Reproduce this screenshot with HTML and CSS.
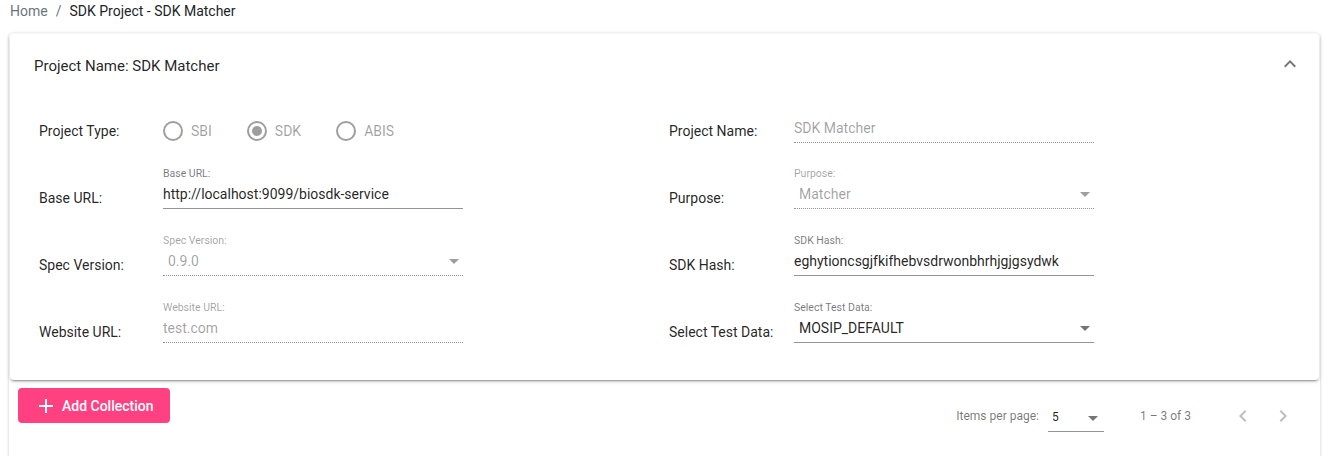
FILE: index.html
```html
<!DOCTYPE html>
<html>
<head>
<meta charset="utf-8">
<link rel="stylesheet" href="styles.css">
</head>
<body>
<div class="crumbs"><span class="crumb-home">Home</span><span class="crumb-sep">/</span><span class="crumb-cur">SDK Project - SDK Matcher</span></div>
<div class="outer">
  <div class="panel">
    <div class="panel-head">
      <span class="panel-title">Project Name: SDK Matcher</span>
      <svg class="chev" viewBox="0 0 24 24" width="24" height="24"><path d="M12 8l-6 6 1.41 1.41L12 10.83l4.59 4.58L18 14z"/></svg>
    </div>
    <div class="panel-body">
      <div class="col">
        <div class="row">
          <div class="lbl">Project Type:</div>
          <div class="radios">
            <span class="radio"><span class="ring"></span>SBI</span>
            <span class="radio on"><span class="ring"></span>SDK</span>
            <span class="radio"><span class="ring"></span>ABIS</span>
          </div>
        </div>
        <div class="row">
          <div class="lbl">Base URL:</div>
          <div class="field"><div class="flabel">Base URL:</div><div class="val">http://localhost:9099/biosdk-service</div></div>
        </div>
        <div class="row">
          <div class="lbl">Spec Version:</div>
          <div class="field dis"><div class="flabel">Spec Version:</div><div class="val sel">0.9.0<span class="arrow"></span></div></div>
        </div>
        <div class="row">
          <div class="lbl">Website URL:</div>
          <div class="field dis"><div class="flabel">Website URL:</div><div class="val">test.com</div></div>
        </div>
      </div>
      <div class="col">
        <div class="row">
          <div class="lbl">Project Name:</div>
          <div class="field dis"><div class="flabel"></div><div class="val">SDK Matcher</div></div>
        </div>
        <div class="row">
          <div class="lbl">Purpose:</div>
          <div class="field dis"><div class="flabel">Purpose:</div><div class="val sel">Matcher<span class="arrow"></span></div></div>
        </div>
        <div class="row">
          <div class="lbl">SDK Hash:</div>
          <div class="field"><div class="flabel">SDK Hash:</div><div class="val">eghytioncsgjfkifhebvsdrwonbhrhjgjgsydwk</div></div>
        </div>
        <div class="row">
          <div class="lbl">Select Test Data:</div>
          <div class="field"><div class="flabel">Select Test Data:</div><div class="val sel">MOSIP_DEFAULT<span class="arrow"></span></div></div>
        </div>
      </div>
    </div>
  </div>
  <div class="bottom">
    <button class="add"><svg viewBox="0 0 24 24" width="24" height="24"><path d="M19 13h-6v6h-2v-6H5v-2h6V5h2v6h6v2z"/></svg><span>Add Collection</span></button>
    <div class="pager">
      <span class="ipp">Items per page:</span>
      <span class="psel">5<span class="arrow"></span></span>
      <span class="range">1 – 3 of 3</span>
      <span class="pbtn"><svg viewBox="0 0 24 24" width="24" height="24"><path d="M15.41 7.41L14 6l-6 6 6 6 1.41-1.41L10.83 12z"/></svg></span>
      <span class="pbtn"><svg viewBox="0 0 24 24" width="24" height="24"><path d="M10 6L8.59 7.41 13.17 12l-4.58 4.59L10 18l6-6z"/></svg></span>
    </div>
  </div>
</div>
</body>
</html>
```
FILE: styles.css
```css
* { box-sizing: border-box; }
body {
  margin: 0;
  background: #fff;
  font-family: Roboto, "Liberation Sans", sans-serif;
  color: rgba(0,0,0,.87);
  overflow: hidden;
}
.crumbs {
  height: 24px;
  padding-left: 10px;
  font-size: 14px;
  line-height: 22px;
  display: flex;
}
.crumb-home { color: #6c757d; }
.crumb-sep { color: #6c757d; padding: 0 8px 0 8px; }
.crumb-cur { color: #212529; }
.outer {
  margin: 9px 0 0 9px;
  width: 1311px;
  height: 440px;
  padding: 1px 1px 0 1px;
  border-radius: 4px;
  box-shadow: 0 1px 3px rgba(0,0,0,.25);
}
.panel {
  border-radius: 4px;
  background: #fff;
  box-shadow: 0 3px 1px -2px rgba(0,0,0,.2), 0 2px 2px 0 rgba(0,0,0,.14), 0 1px 5px 0 rgba(0,0,0,.12);
  height: 346px;
}
.panel-head {
  height: 64px;
  display: flex;
  align-items: center;
  justify-content: space-between;
  padding: 0 17px 0 24px;
}
.panel-title { font-size: 15px; color: rgba(0,0,0,.87); }
.chev { fill: rgba(0,0,0,.54); margin-top: -5px; }
.panel-body {
  display: flex;
  padding: 0 0 0 29px;
}
.col { width: 630px; display: flex; flex-direction: column; }
.row {
  height: 67px;
  display: flex;
  align-items: center;
}
.row:first-child { height: 66px; }
.lbl {
  width: 124px;
  font-size: 14px;
  color: rgba(0,0,0,.87);
}
.col + .col .lbl { width: 125px; }
.radios { display: flex; align-items: center; font-size: 14px; color: rgba(0,0,0,.38); }
.radio { display: flex; align-items: center; margin-right: 35px; }
.ring {
  width: 20px; height: 20px;
  border: 2px solid rgba(0,0,0,.38);
  border-radius: 50%;
  margin-right: 8px;
  display: flex; align-items: center; justify-content: center;
}
.radio.on .ring::after {
  content: "";
  width: 10px; height: 10px; border-radius: 50%;
  background: rgba(0,0,0,.38);
}
.field {
  width: 300px;
  padding-bottom: 19px;
  margin-top: 0;
}
.flabel {
  height: 14px;
  font-size: 10.5px;
  line-height: 14px;
  color: rgba(0,0,0,.54);
}
.dis .flabel { color: rgba(0,0,0,.38); }
.val {
  position: relative;
  font-size: 14px;
  line-height: 20px;
  padding: 3px 0 4px;
  border-bottom: 1px solid rgba(0,0,0,.42);
  white-space: nowrap;
}
.dis .val {
  color: rgba(0,0,0,.38);
  border-bottom: 1px dotted rgba(0,0,0,.42);
}
.val.sel { padding-left: 5px; }
.arrow {
  position: absolute;
  right: 4px;
  top: 11px;
  width: 0; height: 0;
  border-left: 5px solid transparent;
  border-right: 5px solid transparent;
  border-top: 5px solid rgba(0,0,0,.54);
}
.dis .arrow { border-top-color: rgba(0,0,0,.38); }
.bottom {
  display: flex;
  justify-content: space-between;
  padding: 8px 0 0 8px;
}
.add {
  height: 35px;
  border: 0;
  border-radius: 4px;
  background: #ff4081;
  color: #fff;
  display: flex;
  align-items: center;
  padding: 0 16px 0 16px;
  font-family: inherit;
  font-size: 14px;
  font-weight: 500;
}
.add svg { fill: #fff; margin-right: 4px; }
.pager {
  height: 56px;
  display: flex;
  align-items: center;
  font-size: 12px;
  color: rgba(0,0,0,.54);
  padding-right: 16px;
}
.ipp { margin-right: 9px; }
.psel {
  position: relative;
  width: 56px;
  height: 28px;
  padding: 6px 0 0 4px;
  color: rgba(0,0,0,.87);
  font-size: 12px;
  border-bottom: 1px solid rgba(0,0,0,.42);
  margin-top: 4px;
}
.psel .arrow { right: 6px; top: 12px; }
.range { margin: 0 32px 0 36px; }
.pbtn { width: 40px; height: 40px; display: flex; align-items: center; justify-content: center; }
.pbtn svg { fill: rgba(0,0,0,.26); }
```
